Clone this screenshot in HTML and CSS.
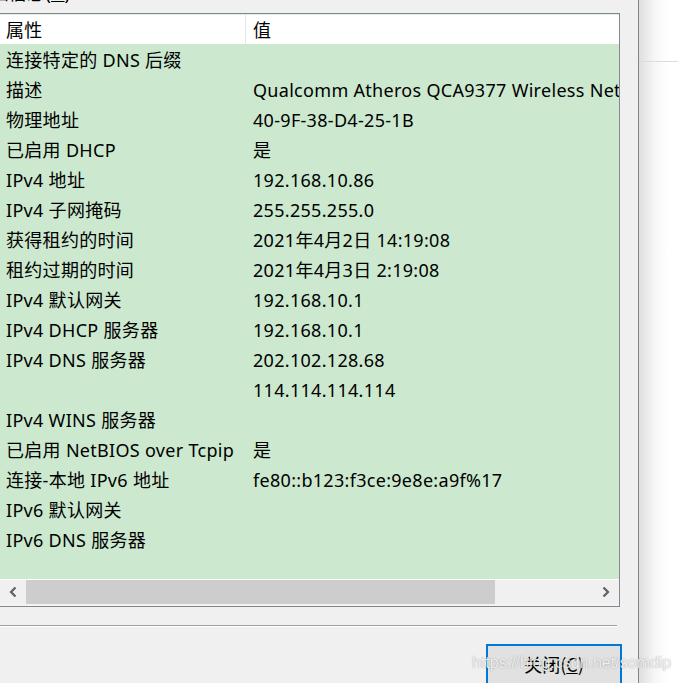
FILE: index.html
```html
<!DOCTYPE html>
<html lang="zh-CN">
<head>
    <meta charset="UTF-8">
    <meta name="viewport" content="width=device-width, initial-scale=1.0">
    <title>网络连接详细信息</title>
    <link rel="stylesheet" href="styles.css">
</head>
<body>
    <div class="screen">
        <div class="dialog">
            <div class="caption"><span class="caption-text">网络连接详细信息(<u>D</u>):</span></div>

            <div class="listbox">
                <div class="list-head">
                    <div class="col-name">属性</div>
                    <div class="col-value">值</div>
                </div>
                <div class="list-body">
                    <div class="row"><span class="col-name">连接特定的 DNS 后缀</span><span class="col-value"></span></div>
                    <div class="row"><span class="col-name">描述</span><span class="col-value">Qualcomm Atheros QCA9377 Wireless Network Adapter</span></div>
                    <div class="row"><span class="col-name">物理地址</span><span class="col-value">40-9F-38-D4-25-1B</span></div>
                    <div class="row"><span class="col-name">已启用 DHCP</span><span class="col-value">是</span></div>
                    <div class="row"><span class="col-name">IPv4 地址</span><span class="col-value">192.168.10.86</span></div>
                    <div class="row"><span class="col-name">IPv4 子网掩码</span><span class="col-value">255.255.255.0</span></div>
                    <div class="row"><span class="col-name">获得租约的时间</span><span class="col-value">2021年4月2日 14:19:08</span></div>
                    <div class="row"><span class="col-name">租约过期的时间</span><span class="col-value">2021年4月3日 2:19:08</span></div>
                    <div class="row"><span class="col-name">IPv4 默认网关</span><span class="col-value">192.168.10.1</span></div>
                    <div class="row"><span class="col-name">IPv4 DHCP 服务器</span><span class="col-value">192.168.10.1</span></div>
                    <div class="row"><span class="col-name">IPv4 DNS 服务器</span><span class="col-value">202.102.128.68</span></div>
                    <div class="row"><span class="col-name"></span><span class="col-value">114.114.114.114</span></div>
                    <div class="row"><span class="col-name">IPv4 WINS 服务器</span><span class="col-value"></span></div>
                    <div class="row"><span class="col-name">已启用 NetBIOS over Tcpip</span><span class="col-value">是</span></div>
                    <div class="row"><span class="col-name">连接-本地 IPv6 地址</span><span class="col-value">fe80::b123:f3ce:9e8e:a9f%17</span></div>
                    <div class="row"><span class="col-name">IPv6 默认网关</span><span class="col-value"></span></div>
                    <div class="row"><span class="col-name">IPv6 DNS 服务器</span><span class="col-value"></span></div>
                </div>
                <div class="hscroll">
                    <div class="scroll-btn">
                        <svg width="10" height="12" viewBox="0 0 10 12"><path d="M7.5 1.5 L3 6 L7.5 10.5" fill="none" stroke="#606060" stroke-width="2.2"/></svg>
                    </div>
                    <div class="scroll-track"><div class="scroll-thumb"></div></div>
                    <div class="scroll-btn">
                        <svg width="10" height="12" viewBox="0 0 10 12"><path d="M2.5 1.5 L7 6 L2.5 10.5" fill="none" stroke="#606060" stroke-width="2.2"/></svg>
                    </div>
                </div>
            </div>

            <div class="divider"></div>

            <div class="actions">
                <button class="btn-close">关闭(<u>C</u>)</button>
            </div>
        </div>
        <div class="backdrop">
            <div class="backdrop-line"></div>
        </div>
        <div class="watermark">https://blog.csdn.net/somdip</div>
    </div>
</body>
</html>
```

FILE: styles.css
```css
body {
    margin: 0;
    padding: 0;
    font-family: "Noto Sans", "Noto Sans CJK SC", sans-serif;
    font-size: 18px;
    letter-spacing: 0.3px;
    color: #000;
    background: #fff;
}
.screen {
    position: relative;
    display: flex;
    width: 678px;
    height: 683px;
    overflow: hidden;
}
.dialog {
    width: 638px;
    flex: none;
    background: #f0f0f0;
    border-right: 1px solid #858585;
}
.caption {
    height: 13px;
    overflow: hidden;
    white-space: nowrap;
}
.caption-text {
    display: block;
    margin-top: -16px;
    margin-left: -101px;
    line-height: 18px;
}
.listbox {
    width: 619px;
    margin-left: -1px;
    border: 1px solid #828790;
    background: #fff;
}
.list-head {
    display: grid;
    grid-template-columns: 246px 1fr;
    height: 30px;
    line-height: 31px;
    background: #fff;
    border-top: 1px solid #dfeee0;
    box-sizing: border-box;
}
.list-head .col-name {
    border-right: 1px solid #e5e5e5;
}
.list-body {
    height: 535px;
    background: #cce8cf;
    overflow: hidden;
}
.row {
    display: grid;
    grid-template-columns: 246px 1fr;
    height: 30px;
    line-height: 32px;
    white-space: nowrap;
    overflow: hidden;
}
.col-name {
    padding-left: 6px;
    overflow: hidden;
}
.col-value {
    padding-left: 7px;
    overflow: hidden;
}
.hscroll {
    display: flex;
    height: 24px;
    margin-top: 1px;
    border-bottom: 2px solid #f3f3f3;
    background: #f0f0f0;
}
.scroll-btn {
    width: 26px;
    flex: none;
    display: flex;
    align-items: center;
    justify-content: center;
}
.scroll-track {
    flex: 1;
}
.scroll-thumb {
    width: 469px;
    height: 100%;
    background: #cdcdcd;
}
.divider {
    width: 617px;
    margin-top: 18px;
    border-top: 1px solid #a0a0a0;
    border-bottom: 1px solid #fff;
}
.actions {
    display: flex;
    justify-content: flex-end;
    padding-right: 16px;
    margin-top: 17px;
}
.btn-close {
    width: 136px;
    height: 44px;
    padding: 0 0 4px;
    font-family: "Noto Sans CJK SC", sans-serif;
    font-size: 18px;
    color: #000;
    background: #e1e1e1;
    border: 2px solid #0078d7;
}
.backdrop {
    flex: 1;
    background: linear-gradient(to right, #dedede, #f7f7f7 16px, #fff 30px);
}
.backdrop-line {
    height: 61px;
    border-bottom: 1px solid #dcdcdc;
}
.watermark {
    position: absolute;
    left: 472px;
    top: 654px;
    font-family: "Liberation Sans", sans-serif;
    font-size: 16px;
    letter-spacing: 0;
    color: rgba(255, 255, 255, 0.85);
    text-shadow: 0 0 1px rgba(0, 0, 0, 0.3), 0 0 2px rgba(0, 0, 0, 0.12);
    white-space: nowrap;
}
```
